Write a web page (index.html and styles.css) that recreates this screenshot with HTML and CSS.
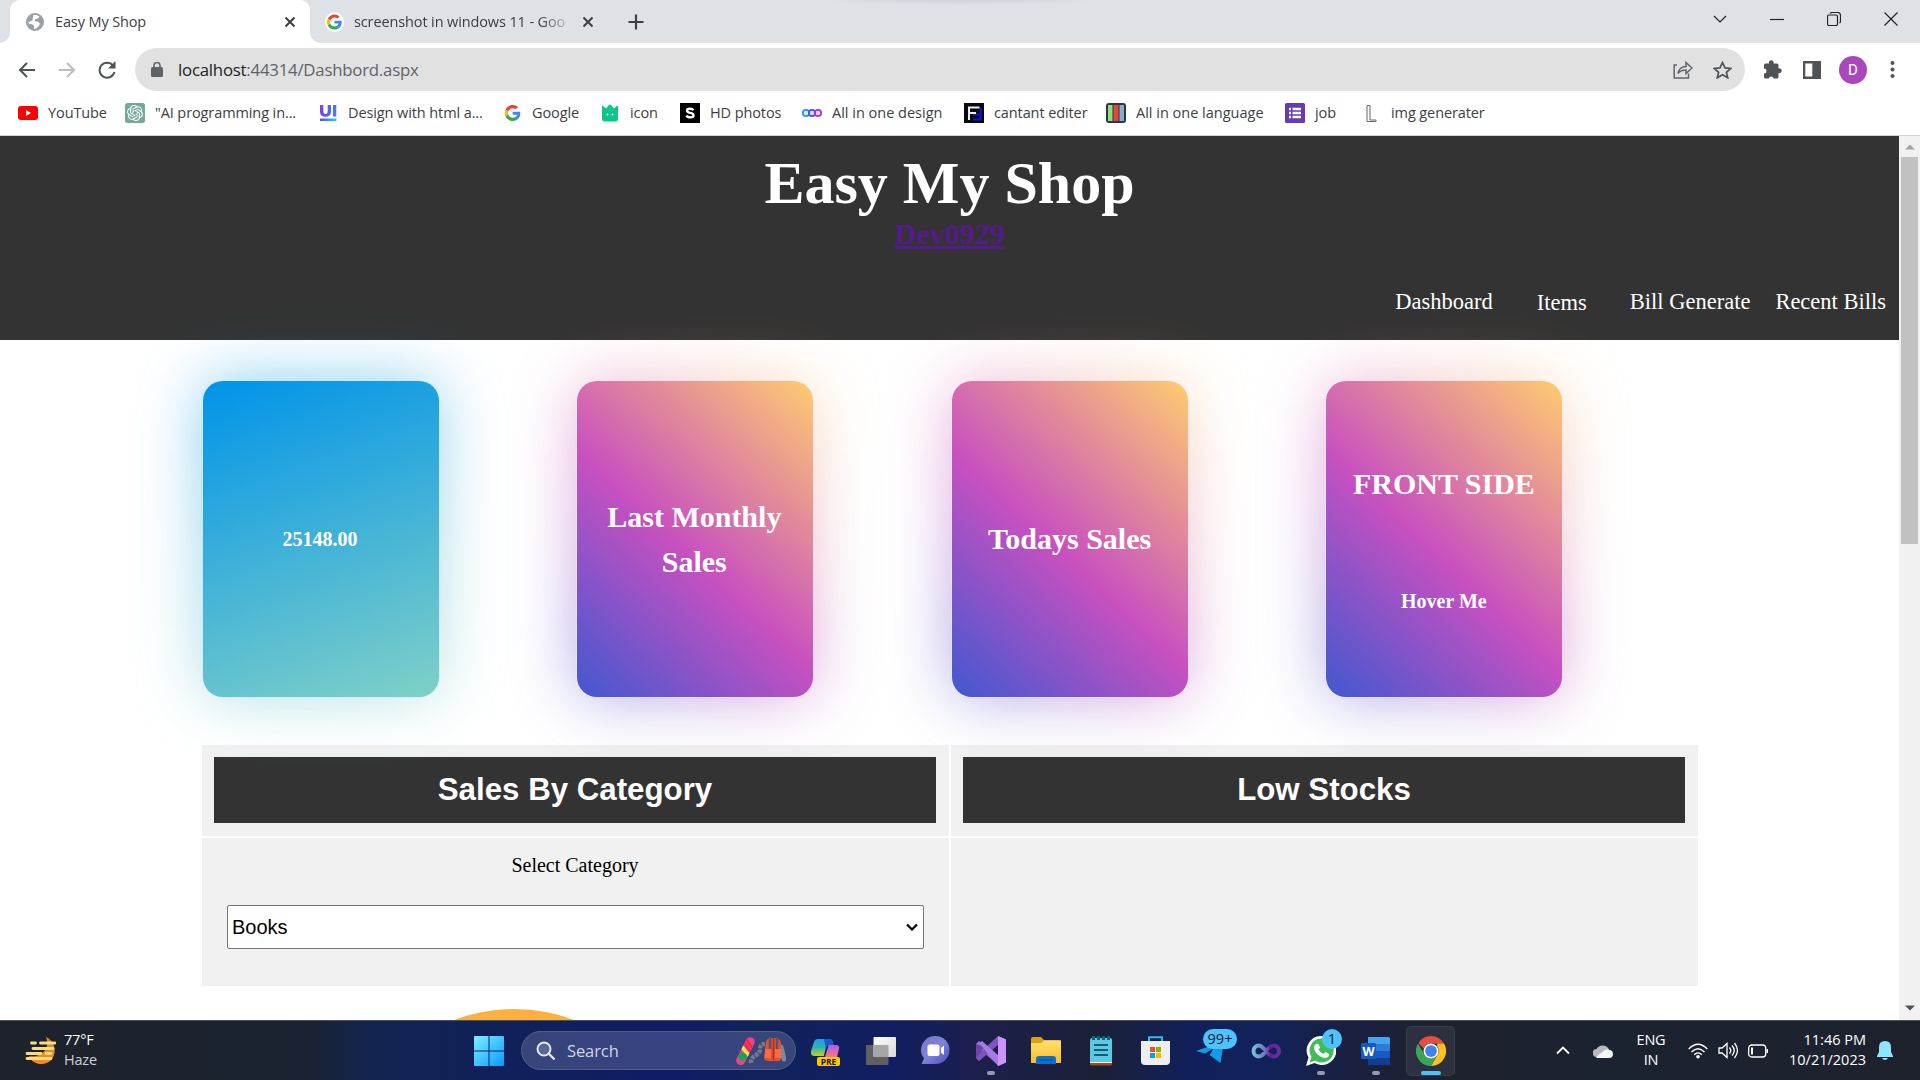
FILE: index.html
```html
<!DOCTYPE html>
<html lang="en">
<head>
<meta charset="utf-8">
<title>Easy My Shop</title>
<link rel="stylesheet" href="styles.css">
</head>
<body>
<svg class="defs" width="0" height="0">
  <defs>
    <symbol id="google" viewBox="0 0 48 48"><path fill="#ea4335" d="M24 9.500c3.500 0 6.700 1.200 9.200 3.600l6.900-6.900C35.900 2.400 30.500 0 24 0 14.600 0 6.500 5.400 2.600 13.200l8 6.200C12.400 13.700 17.700 9.500 24 9.500z"/><path fill="#4285f4" d="M47 24.600c0-1.600-.2-3.100-.4-4.600H24v9h12.900c-.6 3-2.300 5.500-4.800 7.200l7.700 6C44.400 38 47 32 47 24.600z"/><path fill="#fbbc05" d="M10.500 28.600c-.5-1.500-.8-3-.8-4.600s.3-3.100.8-4.600l-8-6.200C1 16.500 0 20.100 0 24s1 7.500 2.600 10.800z"/><path fill="#34a853" d="M24 48c6.500 0 11.900-2.100 15.900-5.800l-7.700-6c-2.200 1.500-4.900 2.300-8.200 2.300-6.300 0-11.600-4.200-13.500-9.900l-8 6.200C6.500 42.600 14.600 48 24 48z"/></symbol>
    <symbol id="close" viewBox="0 0 12 12"><path d="M1.500 1.500l9 9M10.500 1.500l-9 9" fill="none" stroke="#3c4043" stroke-width="2"/></symbol>
  </defs>
</svg>

<div class="tabs">
  <div class="tab active">
    <svg width="18" height="18" viewBox="0 0 18 18"><circle cx="9" cy="9" r="9" fill="#9aa0a6"/><path d="M7 2.500c2-1 5-.3 6.500 1.300l-1.700 1.800-2.600.6-.4 2 3 .5 2.200 1.600-1 2.800-2.600 2.400-2.500.4.4-2.700-1.600-1.700-3.600-.7L2 8.500l2 .4 2.400-2L7 4.600z" fill="#fff"/></svg>
    <span class="tab-name">Easy My Shop</span>
    <svg width="12" height="12"><use href="#close"/></svg>
  </div>
  <div class="tab second">
    <span class="fav"><svg width="15" height="16"><use href="#google"/></svg></span>
    <span class="tab-name fade">screenshot in windows 11 - Goo</span>
    <svg width="12" height="12"><use href="#close"/></svg>
  </div>
  <svg class="plus" width="16" height="16" viewBox="0 0 16 16"><path d="M8 .5v15M.5 8h15" stroke="#3c4043" stroke-width="2.200"/></svg>
  <div class="window-buttons">
    <svg width="14" height="14" viewBox="0 0 14 14"><path d="M1 4l6 6 6-6"/></svg>
    <svg width="14" height="14" viewBox="0 0 14 14"><path d="M0 7.500h14"/></svg>
    <svg width="14" height="14" viewBox="0 0 14 14"><rect x=".5" y="3" width="10" height="10.500" rx="1.500"/><path d="M3 1.500q.5-1 2-1h5.500q3 0 3 3V9q0 1.500-1 2"/></svg>
    <svg width="14" height="14" viewBox="0 0 14 14"><path d="M.5.500l13 13M13.500.500l-13 13"/></svg>
  </div>
</div>

<div class="toolbar">
  <div class="nav-buttons">
    <svg width="18" height="18" viewBox="0 0 18 18"><path d="M17 9H2M9 2L2 9l7 7" fill="none" stroke="#505356" stroke-width="2"/></svg>
    <svg width="18" height="18" viewBox="0 0 18 18"><path d="M1 9h15M9 2l7 7-7 7" fill="none" stroke="#babcbe" stroke-width="2"/></svg>
    <svg width="18" height="18" viewBox="0 0 18 18"><path d="M15 4.500A7.500 7.500 0 1 0 16.400 11" fill="none" stroke="#505356" stroke-width="2"/><path d="M17.500 0v7.500H10z" fill="#505356"/></svg>
  </div>
  <div class="address">
    <svg width="12" height="15" viewBox="0 0 12 15"><rect x="0" y="5" width="12" height="10" rx="1.500" fill="#5f6368"/><path d="M3 6V3.500a3 3 0 0 1 6 0V6" fill="none" stroke="#5f6368" stroke-width="1.600"/></svg>
    <span class="url"><b>localhost</b>:44314/Dashbord.aspx</span>
    <svg class="share" width="20" height="18" viewBox="0 0 20 18"><path d="M4 4H1.200v13h14.300v-4.500M5 12.500C6 7.500 9 5.500 13 5.500V1.500l6 5.500-6 5.500V9C10 9 7 10 5 12.500z" fill="none" stroke="#5f6368" stroke-width="1.500"/></svg>
    <svg width="19" height="18" viewBox="0 0 19 18"><path d="M9.500 1.500l2.500 5.400 5.700.6-4.300 3.800 1.300 5.500-5.200-3-5.200 3 1.300-5.500-4.300-3.800 5.700-.6z" fill="none" stroke="#505356" stroke-width="1.700"/></svg>
  </div>
  <div class="tools">
    <svg width="19" height="19" viewBox="0 0 19 19"><path d="M1 5q0-1.500 1.500-1.500H6a2.400 2.400 0 1 1 4.500 0H14q1.500 0 1.500 1.500v3.500a2.400 2.400 0 1 1 0 4.500v4q0 1.500-1.500 1.500h-3.300a2.500 2.500 0 0 0-4.900 0H2.500Q1 18.500 1 17v-3.500a2.500 2.500 0 0 0 0-5z" fill="#505356"/></svg>
    <svg width="18" height="18" viewBox="0 0 18 18"><path d="M0 0h18v18H0zM2.300 2.500v13h7v-13z" fill="#505356" fill-rule="evenodd"/></svg>
    <span class="avatar">D</span>
    <svg width="5" height="17" viewBox="0 0 5 17"><g fill="#505356"><circle cx="2.500" cy="2" r="2"/><circle cx="2.500" cy="8.500" r="2"/><circle cx="2.500" cy="15" r="2"/></g></svg>
  </div>
</div>

<div class="bookmarks">
  <span class="bm"><svg viewBox="0 0 20 20"><rect y="3" width="20" height="14" rx="3" fill="#f00"/><path d="M8 7l5 3-5 3z" fill="#fff"/></svg>YouTube</span>
  <span class="bm"><svg viewBox="0 0 20 20"><rect width="20" height="20" rx="2.500" fill="#75a99c"/><path transform="translate(2 2) scale(.667)" fill="#fff" d="M22.2819 9.8211a5.9847 5.9847 0 0 0-.5157-4.9108 6.0462 6.0462 0 0 0-6.5098-2.9A6.0651 6.0651 0 0 0 4.9807 4.1818a5.9847 5.9847 0 0 0-3.9977 2.9 6.0462 6.0462 0 0 0 .7427 7.0966 5.98 5.98 0 0 0 .511 4.9107 6.051 6.051 0 0 0 6.5146 2.9001A5.9847 5.9847 0 0 0 13.2599 24a6.0557 6.0557 0 0 0 5.7718-4.2058 5.9894 5.9894 0 0 0 3.9977-2.9001 6.0557 6.0557 0 0 0-.7475-7.0729zm-9.022 12.6081a4.4755 4.4755 0 0 1-2.8764-1.0408l.1419-.0804 4.7783-2.7582a.7948.7948 0 0 0 .3927-.6813v-6.7369l2.02 1.1686a.071.071 0 0 1 .038.052v5.5826a4.504 4.504 0 0 1-4.4945 4.4944zm-9.6607-4.1254a4.4708 4.4708 0 0 1-.5346-3.0137l.142.0852 4.783 2.7582a.7712.7712 0 0 0 .7806 0l5.8428-3.3685v2.3324a.0804.0804 0 0 1-.0332.0615L9.74 19.9502a4.4992 4.4992 0 0 1-6.1408-1.6464zM2.3408 7.8956a4.485 4.485 0 0 1 2.3655-1.9728V11.6a.7664.7664 0 0 0 .3879.6765l5.8144 3.3543-2.0201 1.1685a.0757.0757 0 0 1-.071 0l-4.8303-2.7865A4.504 4.504 0 0 1 2.3408 7.872zm16.5963 3.8558L13.1038 8.364 15.1192 7.2a.0757.0757 0 0 1 .071 0l4.8303 2.7913a4.4944 4.4944 0 0 1-.6765 8.1042v-5.6772a.79.79 0 0 0-.407-.667zm2.0107-3.0231l-.142-.0852-4.7735-2.7818a.7759.7759 0 0 0-.7854 0L9.409 9.2297V6.8974a.0662.0662 0 0 1 .0284-.0615l4.8303-2.7866a4.4992 4.4992 0 0 1 6.6802 4.66zM8.3065 12.863l-2.02-1.1638a.0804.0804 0 0 1-.038-.0567V6.0742a4.4992 4.4992 0 0 1 7.3757-3.4537l-.142.0805L8.704 5.459a.7948.7948 0 0 0-.3927.6813zm1.0976-2.3654l2.602-1.4998 2.6069 1.4998v2.9994l-2.5974 1.4997-2.6067-1.4997z"/></svg>"AI programming in...</span>
  <span class="bm"><svg viewBox="0 0 20 20"><defs><linearGradient id="ui"><stop stop-color="#7b3ff2"/><stop offset="1" stop-color="#3f7df5"/></linearGradient><linearGradient id="ul"><stop stop-color="#5b4bf0"/><stop offset="1" stop-color="#19d3f5"/></linearGradient></defs><path d="M2 2h3.300v6q0 3 2.200 3t2.200-3V2H13v6.500q0 5.300-5.500 5.300T2 8.500zM15 2h3.300v11.500H15z" fill="url(#ui)"/><path d="M2 15.500h16.500V18H2z" fill="url(#ul)"/></svg>Design with html a...</span>
  <span class="bm"><svg viewBox="-8 -6 60 60"><use href="#google" width="48" height="48"/></svg>Google</span>
  <span class="bm"><svg viewBox="0 0 20 20"><path d="M2 3.500Q2 2 3.200 3L6 5.500 9 2q1-1 2 0l3 3.500L16.800 3Q18 2 18 3.500V16q0 2.500-2.500 2.500h-11Q2 18.500 2 16z" fill="#0bc58b"/><path d="M2.500 17.500q7.500 2 15 0l-2 1.500h-11z" fill="#7ce5bf"/><circle cx="7.500" cy="11.500" r="1" fill="#fff"/><circle cx="12.500" cy="11.500" r="1" fill="#fff"/></svg>icon</span>
  <span class="bm"><svg viewBox="0 0 20 20"><path fill="#000" d="M0 0h20v20H0z"/><path d="M13.400 7.300C12.500 5.300 7 5 7 7.700c0 2.900 6.500 1.500 6.500 4.500 0 2.900-6 2.800-7 .3" fill="none" stroke="#fff" stroke-width="2.300"/></svg>HD photos</span>
  <span class="bm wide-text"><svg viewBox="0 0 20 20"><g fill-opacity=".2" stroke-width="1.700"><circle cx="4" cy="10" r="3.200" fill="#2491f5" stroke="#2491f5"/><circle cx="10" cy="10" r="3.200" fill="#4b50dd" stroke="#4b50dd"/><circle cx="16" cy="10" r="3.200" fill="#a632e8" stroke="#a632e8"/></g></svg>All in one design</span>
  <span class="bm"><svg viewBox="0 0 20 20"><path fill="#080810" d="M0 0h20v20H0z"/><path d="M9 16.500h7.500v-12" fill="none" stroke="#0a18e8" stroke-width="2"/><path d="M9 11.500h6" stroke="#0a18e8" stroke-width="2"/><path d="M5 17V4.500h10.500M5 10H12" fill="none" stroke="#eee" stroke-width="2"/></svg>cantant editer</span>
  <span class="bm wide-text"><svg viewBox="0 0 20 20"><rect width="20" height="20" rx="3" fill="#2b3544"/><path fill="#90e07c" d="M2 2h4.500v16H2z"/><path fill="#e8453c" d="M7.500 2h5v16h-5z"/><path fill="#86add0" d="M13.500 2H18v16h-4.500z"/></svg>All in one language</span>
  <span class="bm"><svg viewBox="0 0 20 20"><rect width="20" height="20" rx="1.500" fill="#673ab7"/><path d="M4 6h2M4 10h2M4 14h2M7.500 6H16M7.500 10H16M7.500 14H16" stroke="#fff" stroke-width="2.300"/></svg>job</span>
  <span class="bm"><svg viewBox="0 0 20 20"><path d="M6 2.500h3v14.500h6v1.500H6z" fill="#fff" stroke="#666" stroke-width="1"/></svg>img generater</span>
</div>

<div class="viewport">
  <div class="page">
    <header class="header">
      <h1>Easy My Shop</h1>
      <a class="user">Dev0929</a>
      <nav class="menu"><a>Dashboard</a><a class="items">Items</a><a>Bill Generate</a><a>Recent Bills</a></nav>
    </header>
    <section class="cards">
      <div class="cell"><div class="card blue"><p>25148.00</p></div></div>
      <div class="cell"><div class="card"><h2>Last Monthly Sales</h2></div></div>
      <div class="cell"><div class="card single"><h2>Todays Sales</h2></div></div>
      <div class="cell"><div class="card split"><h2>FRONT SIDE</h2><p>Hover Me</p></div></div>
    </section>
    <section class="panels">
      <div class="panel head"><h3>Sales By Category</h3></div>
      <div class="panel head"><h3>Low Stocks</h3></div>
      <div class="panel body">
        <label>Select Category</label>
        <div class="select">Books<svg width="12" height="8" viewBox="0 0 12 8"><path d="M1 1.500l5 5 5-5" fill="none" stroke="#000" stroke-width="2.200"/></svg></div>
      </div>
      <div class="panel body"></div>
    </section>
    <div class="pie"></div>
  </div>
  <div class="scrollbar">
    <svg width="10" height="6" viewBox="0 0 10 6"><path d="M0 5.500h10L5 .5z" fill="#a3a3a3"/></svg>
    <div class="thumb"></div>
    <svg class="down" width="10" height="6" viewBox="0 0 10 6"><path d="M0 .5h10L5 5.500z" fill="#505050"/></svg>
  </div>
</div>

<div class="taskbar">
  <div class="weather">
    <svg width="31" height="30" viewBox="0 0 31 30"><defs><linearGradient id="moon" x2="0" y2="1"><stop stop-color="#c98a2c"/><stop offset="1" stop-color="#f58a1f"/></linearGradient></defs><path d="M21 1c9 4 11 15 6 22-6 8-20 6-23-3 10 2 22-6 17-19z" fill="url(#moon)"/><path d="M6.500 7h4M15.500 7H30M8 12.500h20M2 17.500h14M21 17.500h5M2 22.500h24" stroke="#f7dc83" stroke-width="2.800" stroke-linecap="round"/></svg>
    <div class="lines"><span>77°F</span><span class="dim">Haze</span></div>
  </div>
  <svg class="start" width="30" height="30" viewBox="0 0 30 30"><defs><linearGradient id="win" x2="1" y2="1"><stop stop-color="#7df0ff"/><stop offset="1" stop-color="#0a98ff"/></linearGradient></defs><path d="M1 0h13.500v14.500H0V1q0-1 1-1zM15.500 0H29q1 0 1 1v13.500H15.500zM0 15.500h14.500V30H1q-1 0-1-1zM15.500 15.500H30V29q0 1-1 1H15.500z" fill="url(#win)"/></svg>
  <div class="search">
    <svg width="19" height="19" viewBox="0 0 19 19"><circle cx="8" cy="8" r="6.500" fill="#596995" stroke="#e5e8f2" stroke-width="2"/><path d="M12.800 12.800l5 5" stroke="#e5e8f2" stroke-width="2.300" stroke-linecap="round"/></svg>
    <span>Search</span>
    <svg class="gear" width="52" height="28" viewBox="0 0 52 28"><path d="M17 26c-1-8 9-7 9-14 0-3 2-5 5-5" fill="none" stroke="#77778d" stroke-width="4.500" stroke-dasharray="3.500 1"/><g transform="rotate(27 11 14)"><rect x="7" y="-1" width="9" height="30" rx="4.500" fill="#ef3f93"/><path d="M7 3l9 5M7 7l9 5" stroke="#f12b35" stroke-width="2.500"/><path d="M7 10l9 4v4l-9-4z" fill="#ffe34c"/><circle cx="11.500" cy="20" r="4" fill="#11a753"/></g><path d="M47 10l3 12" stroke="#85859c" stroke-width="5" stroke-linecap="round"/><path d="M32 6q0-4 4-5h6q5 1 5 6v14q0 3-3 3h-9q-5 0-5-4z" fill="#e84f2d"/><path d="M36 0v13M43 0v13" stroke="#56546a" stroke-width="2.500"/><path d="M31 12h6v9h-6zM41 12h6v9h-6z" fill="#f76c41"/><path d="M39.500 1v22" stroke="#ae2c22" stroke-width="1.500"/></svg>
  </div>
  <div class="apps">
    <span class="app"><svg width="32" height="30" viewBox="0 0 32 30"><defs><linearGradient id="cp1" x2="0" y2="1"><stop stop-color="#239cf0"/><stop offset=".5" stop-color="#27b6b5"/><stop offset="1" stop-color="#d2ce24"/></linearGradient><linearGradient id="cp2" x2="0" y2="1"><stop stop-color="#ae5cf0"/><stop offset="1" stop-color="#fb7777"/></linearGradient></defs><path d="M8 3h12q2.500 0 3.500 6h-5q-2 0-2.700 3l-2 8H5q-5 0-4-5l3-9q1-3 4-3z" fill="url(#cp1)"/><path d="M14 3h6q2.500 0 3.500 6h-5l-2.700 3z" fill="#1b57ce"/><path d="M19 9h7q4 0 3 4l-2 8H15l3-10q.3-2 1-2z" fill="url(#cp2)"/><rect x="7" y="21" width="23" height="9" rx="2" fill="#ffc80a"/><text x="18.500" y="28.500" text-anchor="middle" class="pre">PRE</text></svg></span>
    <span class="app"><svg width="30" height="28" viewBox="0 0 30 28"><defs><linearGradient id="tv" x2="1" y2="1"><stop stop-color="#fff"/><stop offset="1" stop-color="#d8d8d8"/></linearGradient></defs><rect y="8" width="22.500" height="20" rx="1" fill="#606060"/><rect x="7.500" y="0" width="22.500" height="20" rx="1" fill="url(#tv)"/><path d="M7.500 8h15v12h-15z" fill="#a6a6a6"/></svg></span>
    <span class="app"><svg width="29" height="29" viewBox="0 0 29 29"><defs><linearGradient id="ch" x2="1" y2="1"><stop stop-color="#7a77c9"/><stop offset=".5" stop-color="#7e82d9"/><stop offset="1" stop-color="#4a4bc0"/></linearGradient></defs><path d="M14.500 0a14 14 0 1 1 0 28H.5L3 22.500A14 14 0 0 1 14.500 0z" fill="url(#ch)"/><rect x="6.500" y="8.500" width="12" height="11.500" rx="2" fill="#fff"/><path d="M20 12l3-2.500v9.500l-3-2.500z" fill="#fff"/></svg></span>
    <span class="app dot"><svg width="30" height="30" viewBox="0 0 30 30"><path d="M0 8l3-3 19 15v9L0 10z" fill="#9a6ad6"/><path d="M0 8v14l3 3 7-6-5-4 4-4z" fill="#6b46a5"/><path d="M0 22l3 3L22 9V0L9 12z" fill="#7e54bd"/><path d="M22 0l8 3.500v23L22 30l-9-11L3 7l3-2 16 14z" fill="#ab78e8"/><path d="M22 0l8 3.500v23L22 30z" fill="#c994fb"/></svg></span>
    <span class="app"><svg width="30" height="27" viewBox="0 0 30 27"><defs><linearGradient id="fo" x2="0" y2="1"><stop stop-color="#ffdf70"/><stop offset="1" stop-color="#f8be28"/></linearGradient></defs><path d="M0 2q0-2 2-2h8l3 3h15q2 0 2 2v20H0z" fill="#dfa00d"/><path d="M0 6h10l3-2.500h17V26H0z" fill="url(#fo)"/><path d="M5 27v-5q0-3 3-3h14q3 0 3 3v5z" fill="#0a72cd"/><path d="M8.500 23h13" stroke="#034f99" stroke-width="1.200"/></svg></span>
    <span class="app"><svg width="22" height="30" viewBox="0 0 22 30"><path d="M0 26h22v2q0 1.500-1.500 1.500h-19Q0 29.500 0 28z" fill="#a44d17"/><path d="M0 24h22v3H0z" fill="#eee"/><path d="M0 4q0-2 2-2h18q2 0 2 2v22H0z" fill="#5dc8df"/><path d="M3.500 0v4M8.500 0v4M13.500 0v4M18.500 0v4" stroke="#0c6279" stroke-width="3"/><path d="M4 9h14M4 14h14M4 19h14" stroke="#0f5d7b" stroke-width="1.800"/></svg></span>
    <span class="app"><svg width="29" height="29" viewBox="0 0 29 29"><path d="M8 7V1.200h13V7" fill="none" stroke="#2fb9f4" stroke-width="2"/><path d="M0 5h29v20q0 4-4 4H4q-4 0-4-4z" fill="#eee"/><path fill="#f25022" d="M9 11h5v5H9z"/><path fill="#7fba00" d="M15 11h5v5h-5z"/><path fill="#00a4ef" d="M9 17h5v5H9z"/><path fill="#ffb900" d="M15 17h5v5h-5z"/></svg></span>
    <span class="app"><svg width="29" height="29" viewBox="0 0 29 29"><path d="M0 15L28 5l-3.500 22-11-8 4.500-7-9 5.500z" fill="#139be5"/></svg><span class="badge wide">99+</span></span>
    <span class="app"><svg width="30" height="16" viewBox="0 0 30 16"><defs><linearGradient id="inf"><stop stop-color="#78bdd2"/><stop offset=".45" stop-color="#6a7ac0"/><stop offset=".65" stop-color="#6a1b91"/><stop offset="1" stop-color="#66329b"/></linearGradient></defs><path d="M8 2.500c5 0 9 11 14.500 11a5.300 5.300 0 0 0 0-11c-5.500 0-9 11-14.500 11a5.300 5.300 0 0 1 0-11z" fill="none" stroke="url(#inf)" stroke-width="4"/></svg></span>
    <span class="app dot"><svg width="30" height="30" viewBox="0 0 30 30"><path d="M15.500 0a14.500 14.500 0 1 1-7 27L0 30l2.500-8.500A14.500 14.500 0 0 1 15.500 0z" fill="#fff"/><path d="M15.500 2.500a12 12 0 1 1-6.500 22l-5.500 2 2-5.500a12 12 0 0 1 10-18.500z" fill="#3ebf55"/><path d="M10 8q2-1 3 1l1 2.500-1.500 2q2 3.500 5 4.500l2-2 3.500 2q.5 3-3.500 4C13 22 7.500 15 8 11q.5-2 2-3z" fill="#fff"/></svg><span class="badge one">1</span></span>
    <span class="app dot"><svg width="29" height="28" viewBox="0 0 29 28"><path fill="#43a5ee" d="M7 0h20.500Q29 0 29 1.500V7H7z"/><path fill="#2c7cd6" d="M7 7h22v7H7z"/><path fill="#185abd" d="M7 14h22v7H7z"/><path fill="#103f91" d="M7 21h22v5.500q0 1.500-1.500 1.500H7z"/><rect y="6" width="15" height="16" rx="1.500" fill="#185abd"/><text x="7.500" y="18.500" text-anchor="middle" class="word">W</text></svg></span>
    <span class="app current"><svg width="30" height="30" viewBox="0 0 48 48"><path fill="#e8402f" d="M24 0a24 24 0 0 1 20.800 12H24a12 12 0 0 0-11.500 8.500L4 11A24 24 0 0 1 24 0z"/><path fill="#fdbd10" d="M44.800 12A24 24 0 0 1 24 48l10.400-18A12 12 0 0 0 34 16.500V12z"/><path fill="#2c9e4b" d="M24 48A24 24 0 0 1 3.200 12l10.400 18A12 12 0 0 0 34.400 30z"/><circle cx="24" cy="24" r="12" fill="#fff"/><circle cx="24" cy="24" r="9.400" fill="#3479e8"/></svg></span>
  </div>
  <div class="tray">
    <svg class="up" width="14" height="9" viewBox="0 0 14 9"><path d="M1 7.500l6-6 6 6" fill="none" stroke="#fff" stroke-width="1.800"/></svg>
    <svg class="cloud" width="20" height="14" viewBox="0 0 20 14"><path d="M4 13a4 4 0 0 1-.5-8A7 7 0 0 1 16 5.500 4 4 0 0 1 16 13z" fill="#b5b7bb"/><path d="M3 13l9-7q2-1.500 4 0a4 4 0 0 1 0 8H4z" fill="#f5f5f5"/></svg>
    <div class="lines lang"><span>ENG</span><span>IN</span></div>
    <svg class="wifi" width="20" height="16" viewBox="0 0 20 16"><g fill="none" stroke="#fff" stroke-width="1.400"><path d="M.7 6q9.300-9.500 18.600 0M3.500 9q6.500-6.500 13 0M6.200 11.800q3.800-3.800 7.600 0"/></g><circle cx="10" cy="13.700" r="1.800" fill="#fff"/></svg>
    <svg class="vol" width="21" height="17" viewBox="0 0 21 17"><g fill="none" stroke="#fff" stroke-width="1.300"><path d="M1 6h3l5-4.500v14L4 11H1zM11.500 5.500q2.500 3 0 6M14 3.500q4.500 5 0 10M16.500 1q6 7.500 0 15"/></g></svg>
    <svg class="bat" width="21" height="14" viewBox="0 0 21 14"><rect x=".7" y="1" width="17" height="12" rx="3" fill="none" stroke="#fff" stroke-width="1.300"/><path d="M3 3.500h2v7H3zM18.500 5H20v4h-1.500z" fill="#fff"/></svg>
    <div class="lines clock"><span>11:46 PM</span><span>10/21/2023</span></div>
    <svg class="bell" width="16" height="19" viewBox="0 0 16 19"><path d="M8 0q6 0 6 6v5l2 4v1H0v-1l2-4V6q0-6 6-6zM5 17h6q-1 2-3 2t-3-2z" fill="#90e5fb"/></svg>
  </div>
</div>
</body>
</html>
```
FILE: styles.css
```css
* { box-sizing: border-box; }
body {
  margin: 0;
  width: 1920px;
  height: 1080px;
  overflow: hidden;
  display: flex;
  flex-direction: column;
  font-family: "Open Sans", sans-serif;
  font-size: 14.5px;
  color: #3c4043;
  background: #fff;
}
svg { flex: none; display: block; }
.defs { position: absolute; }

/* Tab strip */
.tabs {
  height: 43px;
  flex: none;
  display: flex;
  align-items: center;
  background: #dee1e6 radial-gradient(ellipse 140px 5px at 960px 0, #cfd2d8, rgba(222, 225, 230, 0)) no-repeat;
  padding: 0 22px 0 10px;
}
.tab { display: flex; align-items: center; height: 43px; white-space: nowrap; letter-spacing: -0.12px; }
.tab.active { width: 300px; background: #fff; border-radius: 10px 10px 0 0; padding: 0 14px 0 16px; position: relative; }
.tab.active::before, .tab.active::after {
  content: "";
  position: absolute;
  bottom: 0;
  width: 10px;
  height: 10px;
}
.tab.active::before { left: -10px; background: radial-gradient(circle at 0 0, #dee1e6 9.5px, #fff 10px); }
.tab.active::after { right: -10px; background: radial-gradient(circle at 100% 0, #dee1e6 9.5px, #fff 10px); }
.tab-name { flex: 1; margin-left: 11px; padding-bottom: 1px; }
.tab.second { width: 284px; padding-left: 15px; }
.tab.second > svg { margin-left: auto; }
.fav { width: 19px; height: 20px; border-radius: 50%; background: #fff; display: flex; align-items: center; justify-content: center; }
.fade { flex: none; margin-left: 10px; -webkit-mask-image: linear-gradient(90deg, #000 88%, rgba(0, 0, 0, 0.25)); mask-image: linear-gradient(90deg, #000 88%, rgba(0, 0, 0, 0.25)); }
.plus { margin-left: 34px; }
.window-buttons { margin-left: auto; display: flex; gap: 43px; padding-bottom: 6px; }
.window-buttons svg { fill: none; stroke: #222; stroke-width: 1.2; }

/* Toolbar */
.toolbar { flex: none; height: 53px; display: flex; align-items: center; padding-left: 18px; }
.nav-buttons { width: 117px; display: flex; gap: 22px; }
.address {
  width: 1610px;
  height: 43px;
  border-radius: 22px;
  background: #e1e1e1;
  display: flex;
  align-items: center;
  padding: 0 13px 0 16px;
}
.url { margin-left: 15px; font-size: 16.8px; letter-spacing: -0.22px; color: #5f6368; }
.url b { font-weight: 400; color: #202124; }
.share { margin: 0 20px 0 auto; }
.tools { display: flex; align-items: center; margin-left: 18px; }
.tools svg:nth-child(2) { margin: 0 18px 0 21px; }
.avatar { width: 28px; height: 28px; border-radius: 50%; background: #ab47bc; color: #fff; font: 15px/28px Roboto, sans-serif; text-align: center; margin-right: 23px; }

/* Bookmarks */
.bookmarks {
  flex: none;
  height: 40px;
  padding: 0 0 6px 18px;
  border-bottom: 1px solid #d0d3d3;
  display: grid;
  grid-template-columns: 107px 193px 184px 98px 80px 122px 162px 142px 179px 76px 130px;
  align-items: center;
  white-space: nowrap;
  letter-spacing: -0.1px;
}
.bm { display: flex; align-items: center; gap: 10px; }
.bm svg { width: 20px; height: 20px; }
.wide-text { letter-spacing: 0; }

/* Page content */
.viewport { height: 884px; display: flex; overflow: hidden; }
.page {
  width: 1899px;
  height: 884px;
  overflow: hidden;
  color: #000;
  font-family: "Liberation Serif", "Times New Roman", serif;
}
.header { height: 204px; background: #333; color: #fff; display: flex; flex-direction: column; align-items: center; padding-top: 12px; }
h1 { margin: 0; font-size: 60px; line-height: 70px; }
.user { font-size: 30px; line-height: 32px; font-weight: 700; color: #551a8b; text-decoration: underline; text-decoration-thickness: 3px; }
.menu { align-self: stretch; display: flex; justify-content: flex-end; margin-top: 38px; padding-right: 13px; font-size: 22.5px; line-height: 28px; }
.menu a { margin-left: 25px; }
.menu .items { margin: 1px 18px 0 44px; }

.cards { position: relative; z-index: 0; display: grid; grid-template-columns: repeat(4, 374.3px); margin: 41px 0 0 203px; }
.card {
  position: relative;
  width: 236px;
  height: 316px;
  border-radius: 20px;
  background: linear-gradient(43deg, #4158d0 0%, #c850c0 46%, #ffcc70 100%);
  box-shadow: 0 0 0 1px rgba(240, 230, 255, 0.6);
  color: #fff;
  text-align: center;
  display: flex;
  flex-direction: column;
  align-items: center;
  justify-content: center;
  padding: 0 23px 0 21px;
}
.card::before {
  content: "";
  position: absolute;
  inset: 0;
  z-index: -1;
  border-radius: 20px;
  background: inherit;
  filter: blur(32px);
  opacity: 0.5;
}
.card.blue { background: linear-gradient(160deg, #0093e9 0%, #80d0c7 100%); box-shadow: 0 0 0 1px rgba(200, 235, 245, 0.6); }
.card h2 { margin: 0; font-size: 30px; line-height: 45px; }
.card p { margin: 0; font-size: 20px; line-height: 30px; font-weight: 700; }
.card.single { padding: 0 22px 2px; }
.card.split h2 { margin-bottom: 80px; white-space: nowrap; }
.card.split { padding: 0 22px 2px; }

.panels { display: grid; grid-template-columns: 747px 747px; grid-template-rows: 91px 148px; gap: 2px; margin: 48px 0 0 202px; }
.panel { background: #f1f1f1; }
.head { padding: 12px 13px 13px 12px; }
h3 { margin: 0; height: 66px; background: #333; color: #fff; text-align: center; font: 700 31.25px/65px "Liberation Sans", Arial, sans-serif; }
.body label { display: block; text-align: center; font-size: 20px; line-height: 24px; margin: 15px 1px 0 0; }
.select {
  margin: 28px 25px 0;
  height: 44px;
  border: 1px solid #767676;
  border-radius: 2px;
  background: #fff;
  display: flex;
  align-items: center;
  justify-content: space-between;
  padding: 0 5px 0 4px;
  font: 20px "Liberation Sans", Arial, sans-serif;
}
.pie { width: 338px; height: 338px; border-radius: 50%; background: #fbb03f; margin: 23px 0 0 345px; }

.scrollbar { width: 21px; background: #f1f1f1; display: flex; flex-direction: column; align-items: center; padding: 8px 0 9px; }
.thumb { width: 17px; height: 387px; margin-top: 7px; background: #c1c1c1; }
.down { margin-top: auto; }

/* Taskbar */
.taskbar {
  flex: none;
  height: 60px;
  display: flex;
  align-items: center;
  border-top: 1px solid #46505d;
  color: #fff;
  background: linear-gradient(90deg, #1e222b 0, #1a2331 310px, #12244f 365px, #102158 480px, #101c66 680px, #11225a 760px, #111e62 890px, #1c1f48 990px, #1b2038 1100px, #11205a 1190px, #11225a 1270px, #1a2040 1350px, #1e222e 1450px, #1b2230 1600px, #1d222d 1920px);
}
.weather { width: 474px; display: flex; align-items: center; gap: 8px; padding-left: 25px; }
.lines { display: flex; flex-direction: column; line-height: 20px; font-size: 14.5px; letter-spacing: -0.2px; padding-bottom: 2px; }
.dim { color: #ccd0d6; }
.search {
  width: 275px;
  height: 39px;
  margin-left: 17px;
  border: 1px solid #535f86;
  border-radius: 20px;
  background: rgba(145, 155, 195, 0.3);
  display: flex;
  align-items: center;
  padding: 0 9px 0 14px;
  font-size: 16.5px;
  color: #d0d4e3;
}
.search span { margin-left: 12px; letter-spacing: -0.1px; }
.gear { margin-left: auto; }
.apps { display: flex; margin-left: 2px; }
.app { width: 55px; height: 50px; display: flex; align-items: center; justify-content: center; position: relative; }
.pre { font: 700 8.5px "Open Sans", sans-serif; fill: #151515; }
.word { font: 700 12.5px "Open Sans", sans-serif; fill: #fff; }
.dot::after, .current::after { content: ""; position: absolute; bottom: 1px; width: 8px; height: 4px; border-radius: 2px; background: #969aac; }
.current::before { content: ""; position: absolute; inset: 0 3px; border-radius: 5px; background: rgba(255, 255, 255, 0.07); border: 1px solid rgba(255, 255, 255, 0.06); }
.current::after { width: 20px; background: #4cc2ff; }
.badge { position: absolute; top: 3px; height: 20px; border-radius: 10px; background: #4cc2ff; color: #10202e; text-align: center; line-height: 20px; }
.wide { left: 20px; width: 34px; }
.one { left: 29px; width: 20px; }
.tray { margin-left: auto; display: flex; align-items: center; padding-right: 27px; }
.cloud { margin-left: 23px; }
.lang { align-items: center; width: 30px; margin-left: 23px; }
.wifi { margin-left: 22px; }
.vol { margin-left: 10px; }
.bat { margin-left: 9px; }
.clock { width: 77px; align-items: flex-end; margin-left: 20px; letter-spacing: 0; }
.bell { margin-left: 11px; }
```
